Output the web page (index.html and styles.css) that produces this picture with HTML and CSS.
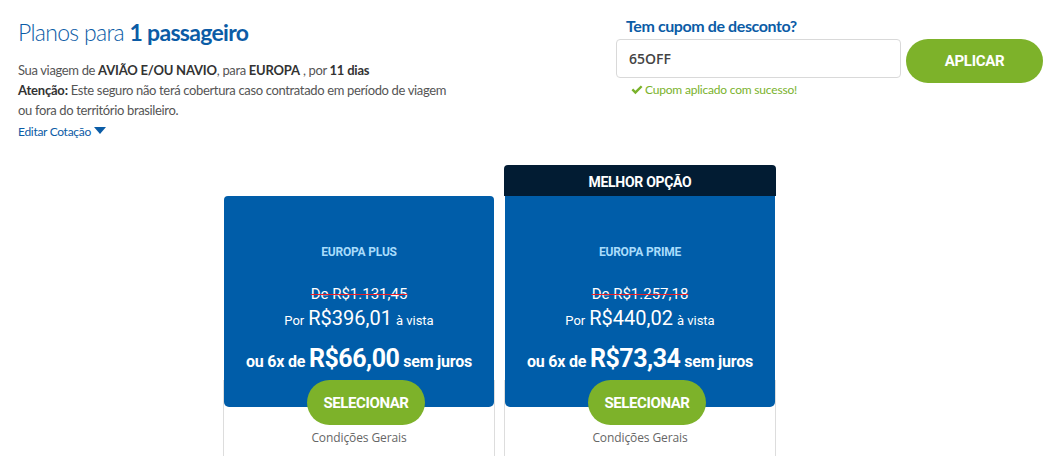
FILE: index.html
```html
<!DOCTYPE html>
<html lang="pt-BR">
<head>
<meta charset="utf-8">
<title>Planos</title>
<link rel="stylesheet" href="styles.css">
</head>
<body>
<div class="top">
  <div class="intro">
    <h1 class="title">Planos para <strong>1 passageiro</strong></h1>
    <p class="line">Sua viagem de <b>AVIÃO E/OU NAVIO</b>, para <b>EUROPA</b> , por <b>11 dias</b></p>
    <p class="line"><b>Atenção:</b> Este seguro não terá cobertura caso contratado em período de viagem ou fora do território brasileiro.</p>
    <a class="edit">Editar Cotação <svg class="caret" width="12" height="8" viewBox="0 0 12 8"><path d="M0 0 H12 L6 7 Z" fill="#0b5ca6"/></svg></a>
  </div>
  <div class="coupon">
    <div class="coupon-label">Tem cupom de desconto?</div>
    <div class="coupon-row">
      <div class="coupon-input">65OFF</div>
      <button class="btn-apply">APLICAR</button>
    </div>
    <div class="success"><svg class="check" width="12" height="10" viewBox="0 0 12 10"><path d="M0.5 5.2 L2.2 3.6 L4.4 5.8 L9.8 0.5 L11.5 2.1 L4.4 9.2 Z" fill="#7ab22b"/></svg>Cupom aplicado com sucesso!</div>
  </div>
</div>

<div class="plans">
  <div class="plan">
    <div class="plan-tag plan-tag-empty"></div>
    <div class="plan-body">
      <div class="plan-name">EUROPA PLUS</div>
      <div class="plan-old">De R$1.131,45</div>
      <div class="plan-cash"><span class="small">Por</span> <span class="cash">R$396,01</span> <span class="small">à vista</span></div>
      <div class="plan-inst">ou 6x de <span class="inst">R$66,00</span> sem juros</div>
    </div>
    <div class="plan-foot">
      <button class="btn-select">SELECIONAR</button>
      <div class="cond">Condições Gerais</div>
    </div>
  </div>
  <div class="plan">
    <div class="plan-tag">MELHOR OPÇÃO</div>
    <div class="plan-body">
      <div class="plan-name">EUROPA PRIME</div>
      <div class="plan-old">De R$1.257,18</div>
      <div class="plan-cash"><span class="small">Por</span> <span class="cash">R$440,02</span> <span class="small">à vista</span></div>
      <div class="plan-inst">ou 6x de <span class="inst">R$73,34</span> sem juros</div>
    </div>
    <div class="plan-foot">
      <button class="btn-select">SELECIONAR</button>
      <div class="cond">Condições Gerais</div>
    </div>
  </div>
</div>
</body>
</html>
```

FILE: styles.css
```css
* { box-sizing: border-box; }
html, body { margin: 0; padding: 0; background: #fff; }
body { font-family: "Lato", "Noto Sans", sans-serif; color: #555; overflow: hidden; height: 456px; }

.top { display: flex; padding: 16px 0 0 18px; height: 165px; }
.intro { width: 460px; }
.title { margin: 0; font-size: 23px; font-weight: 300; color: #0b5ca6; line-height: 32px; letter-spacing: -0.7px; }
.title strong { font-weight: 700; }
.line { margin: 0; font-size: 13px; line-height: 20px; color: #555; letter-spacing: -0.35px; width: 440px; }
.intro .line:first-of-type { margin-top: 12px; }
.line b { color: #333; font-weight: 700; letter-spacing: -0.2px; }
.edit { display: inline-flex; align-items: center; gap: 3px; margin-top: 3px; font-size: 12px; color: #0b5ca6; line-height: 18px; letter-spacing: -0.3px; }
.caret { margin-top: -2px; }

.coupon { margin-left: 138px; width: 428px; padding-top: 0; }
.coupon-label { padding-left: 10px; font-size: 16px; font-weight: 700; color: #0b5ca6; line-height: 20px; letter-spacing: -0.4px; }
.coupon-row { display: flex; align-items: flex-start; gap: 5px; margin-top: 3px; }
.coupon-input { width: 285px; height: 39px; border: 1px solid #d9d9d9; border-radius: 4px; padding: 0 12px; font-family: "Open Sans", sans-serif; font-weight: 600; font-size: 14px; color: #444; line-height: 37px; }
.btn-apply { width: 137px; height: 44px; border: 0; border-radius: 22px; background: #7db22a; color: #fff; font-family: "Roboto", sans-serif; font-weight: 700; font-size: 15px; letter-spacing: -0.3px; }
.success { display: flex; align-items: center; gap: 2px; padding-left: 15px; margin-top: -1px; font-size: 12px; color: #7ab22b; letter-spacing: -0.2px; line-height: 16px; }

.plans { display: flex; gap: 9px; padding-left: 223px; }
.plan { width: 272px; display: flex; flex-direction: column; }
.plan-tag { height: 31px; background: #021c33; border-radius: 4px 4px 0 0; color: #fff; font-family: "Roboto", sans-serif; font-weight: 700; font-size: 14px; text-align: center; line-height: 34px; letter-spacing: -0.3px; }
.plan-tag-empty { background: transparent; }
.plan-body { margin: 0 1px; height: 211px; background: #005da9; border-radius: 4px 4px 5px 5px; color: #fff; text-align: center; font-family: "Roboto", sans-serif; padding-top: 48px; }
.plan-tag + .plan-body { border-radius: 0 0 5px 5px; }
.plan-tag-empty + .plan-body { border-radius: 4px 4px 5px 5px; }
.plan-name { font-size: 12px; font-weight: 700; color: #a9dcfb; line-height: 16px; letter-spacing: -0.2px; }
.plan-old { margin-top: 25px; font-size: 15px; line-height: 18px; text-decoration: line-through; text-decoration-color: #e8202a; text-decoration-thickness: 1px; }
.plan-cash { margin-top: 3px; line-height: 24px; }
.small { font-size: 13px; }
.cash { font-size: 20px; }
.plan-inst { margin-top: 10px; font-size: 16px; font-weight: 700; line-height: 32px; letter-spacing: -0.2px; }
.inst { font-size: 25px; letter-spacing: -0.5px; }

.plan-foot { border-left: 1px solid #ddd; border-right: 1px solid #ddd; margin-top: -27px; display: flex; flex-direction: column; align-items: center; height: 90px; flex-shrink: 0; }
.btn-select { width: 118px; height: 45px; margin-left: 14px; border: 0; border-radius: 23px; background: #7db22a; color: #fff; font-family: "Roboto", sans-serif; font-weight: 700; font-size: 15px; letter-spacing: -0.4px; }
.cond { margin-top: 5px; font-family: "Open Sans", sans-serif; font-size: 12px; color: #666; line-height: 16px; letter-spacing: -0.1px; }
```
